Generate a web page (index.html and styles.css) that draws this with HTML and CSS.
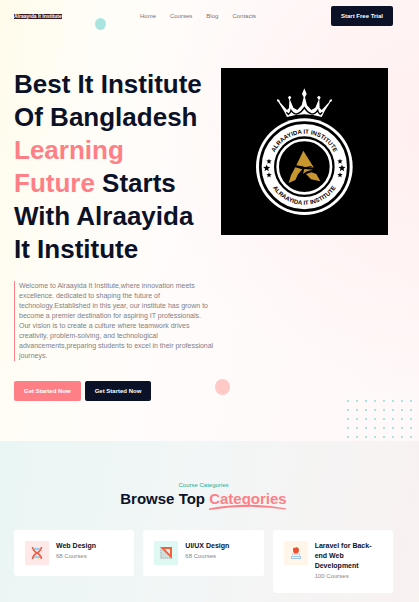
FILE: index.html
```html
<!DOCTYPE html>
<html lang="en">
<head>
<meta charset="utf-8">
<meta name="viewport" content="width=device-width, initial-scale=1">
<title>Alraayida It Institute</title>
<link rel="stylesheet" href="styles.css">
</head>
<body>
<div class="top">
  <header class="header">
    <a class="brand" href="#">Alraayida It Institute</a>
    <nav class="nav">
      <a href="#">Home</a>
      <a href="#">Courses</a>
      <a href="#">Blog</a>
      <a href="#">Contacts</a>
    </nav>
    <button class="btn btn-dark" type="button">Start Free Trial</button>
  </header>
  <main class="hero">
    <div class="intro">
      <h1>Best It Institute<br>Of Bangladesh<br><span class="accent">Learning<br>Future</span> Starts<br>With Alraayida<br>It Institute</h1>
      <p class="lead">Welcome to Alraayida It Institute,where innovation meets<br>excellence. dedicated to shaping the future of<br>technology.Established in this year, our institute has grown to<br>become a premier destination for aspiring IT professionals.<br>Our vision is to create a culture where teamwork drives<br>creativity, problem-solving, and technological<br>advancements,preparing students to excel in their professional<br>journeys.</p>
      <div class="actions">
        <button class="btn btn-pink" type="button">Get Started Now</button>
        <button class="btn btn-dark" type="button">Get Started Now</button>
      </div>
    </div>
    <svg class="emblem" viewBox="18 24 501 501" role="img" aria-label="Alraayida It Institute emblem">
      <defs>
        <path id="arc-top" d="M169 320A99 99 0 0 1 367 320"/>
        <path id="arc-bottom" d="M154 320A114 114 0 0 0 382 320"/>
        <path id="star" d="M0-8 2-3 8-2.500 3.500 1.500 5 7.500 0 4-5 7.500-3.500 1.500-8-2.500-2-3Z"/>
      </defs>
      <rect x="18" y="24" width="501" height="501" fill="#000"/>
      <path fill="#fff" d="M268 85 275 102 270 112 276 136 289 150 301 143 311 119 306 112 312 107 317 112 313 121 314 144 320 150 342 127 344 120 350 117 351 123 346 126 329 153 320 171 Q268 155 216 171L207 153 190 126 186 123 187 117 193 120 195 127 216 150 222 144 223 121 219 112 224 107 229 112 225 119 235 143 247 150 260 136 266 112 261 102Z"/>
      <path fill="none" stroke="#000" stroke-width="4" d="M214 157 220 163Q227 158 228 151 235 162 246 162 261 156 268 143 275 156 290 162 301 162 308 151 309 158 316 163L322 157"/>
      <circle cx="268" cy="320" r="145" fill="#fff"/>
      <circle cx="268" cy="320" r="132" fill="none" stroke="#000" stroke-width="8"/>
      <circle cx="268" cy="320" r="91" fill="#000"/>
      <circle cx="268" cy="320" r="80" fill="none" stroke="#fff" stroke-width="8"/>
      <g class="emblem-text">
        <text><textPath href="#arc-top" startOffset="50%">ALRAAYIDA IT INSTITUTE</textPath></text>
        <text><textPath href="#arc-bottom" startOffset="50%">ALRAAYIDA IT INSTITUTE</textPath></text>
      </g>
      <use href="#star" x="162" y="304"/><use href="#star" transform="translate(155 324) scale(1.300)"/><use href="#star" x="162" y="345"/>
      <use href="#star" x="375" y="304"/><use href="#star" transform="translate(381 324) scale(1.300)"/><use href="#star" x="375" y="345"/>
      <g fill="#c8962e">
        <path d="M265 272 296 322 280 324 262 319 244 316Z"/>
        <path d="M241 322 262 328 249 343 241 360 221 369 228 346Z"/>
        <path d="M273 342 289 337 304 342 316 364 288 358Z"/>
        <path d="M268 327 294 329 276 334 264 341Z"/>
      </g>
      <path d="M240 318Q262 328 290 320" fill="none" stroke="#000" stroke-width="4"/>
    </svg>
  </main>
  <span class="bubble bubble-teal"></span>
  <span class="bubble bubble-pink"></span>
  <span class="dots"></span>
</div>
<section class="categories">
  <p class="eyebrow">Course Categories</p>
  <h2>Browse Top <span class="accent marked">Categories<svg class="swoosh" viewBox="0 0 75 6" preserveAspectRatio="none" aria-hidden="true"><path d="M0 4.500Q36-3 75 4.500L74 5.500Q38 0 0 6Z"/></svg></span></h2>
  <div class="grid">
    <article class="card">
      <span class="icon icon-pink">
        <svg viewBox="0 0 12 12" aria-hidden="true"><path d="M2 .5h8L6 5ZM2 11.500h8L6 7Z" fill="#d5edf5"/><path d="M3 2h6M3 10h6" stroke="#62b5dc"/><path d="M1.500 0Q2 4 6 6T10.500 12M10.500 0Q10 4 6 6T1.500 12" fill="none" stroke="#ef5a40" stroke-width="1.600"/><path d="M4 1h1M7 11h1" stroke="#f9bc45"/></svg>
      </span>
      <div><h3>Web Design</h3><p>68 Courses</p></div>
    </article>
    <article class="card">
      <span class="icon icon-teal">
        <svg viewBox="0 0 12 12" aria-hidden="true"><path d="M0 1h3l8 9v2H0Z" fill="#cfdedd"/><path d="M1 3v8h9" fill="none" stroke="#a9babb" stroke-dasharray="1 1"/><path d="M0 0H12V12ZM5 2 10 7V2Z" fill="#f4603c" fill-rule="evenodd"/><path d="M5 2 10 7V2Z" fill="#fbeae5"/></svg>
      </span>
      <div><h3>UI/UX Design</h3><p>68 Courses</p></div>
    </article>
    <article class="card">
      <span class="icon icon-sand">
        <svg viewBox="0 0 12 12" aria-hidden="true"><path d="M2 6h8v3H2Z" fill="#cfdbe8"/><path d="M1 9h10v3H1Z" fill="#a5c5e6"/><path d="M2 8.500h7M2 10.500h8" stroke="#f5f7fa"/><path d="M6 1Q9 0 9 3T6 6.500Q3 6.500 3 3T6 1Z" fill="#ef4d30"/><path d="M6 1.500Q6 0 7.500 0" fill="none" stroke="#698c42"/></svg>
      </span>
      <div><h3>Laravel for Back-end Web Development</h3><p>100 Courses</p></div>
    </article>
  </div>
</section>
</body>
</html>
```
FILE: styles.css
```css
* {
  box-sizing: border-box;
}

body {
  margin: 0;
  min-height: 100vh;
  display: flex;
  flex-direction: column;
  font-family: "Liberation Sans", Arial, sans-serif;
  font-size: 6px;
  color: #0b1227;
}

h1, h2, h3, p {
  margin: 0;
}

a {
  color: inherit;
  text-decoration: none;
}

.top {
  position: relative;
  padding: 6px 26px 40px 14px;
  background:
    radial-gradient(circle at 100% 30%, #ffeff0 0, rgba(255, 242, 243, 0) 50%),
    linear-gradient(100deg, #fffcec 0%, #fffdf8 22%, #fffbfb 50%, #fff8f8 100%);
}

.header {
  display: grid;
  grid-template-columns: 126px 1fr auto;
  align-items: center;
}

.brand {
  justify-self: start;
  background: #3a191f;
  color: #fff;
  font-size: 5px;
  font-weight: bold;
  line-height: 5px;
}

.nav {
  display: flex;
  gap: 14px;
  color: #747579;
}

.btn {
  height: 20px;
  padding: 0 10px;
  border: 0;
  border-radius: 2px;
  color: #fff;
  font-family: inherit;
  font-size: 6px;
  font-weight: bold;
  white-space: nowrap;
}

.btn-dark {
  background: #0b1227;
}

.btn-pink {
  background: #ff7f87;
}

.hero {
  display: grid;
  grid-template-columns: minmax(0, 193fr) minmax(0, 167fr);
  column-gap: 14px;
  align-items: start;
  padding: 42px 5px 0 0;
}

h1 {
  font-size: 26px;
  line-height: 33px;
  white-space: nowrap;
}

.accent {
  color: #ff7f87;
}

.lead {
  margin: 15px 0 20px;
  padding-left: 4px;
  border-left: 1px solid #ff7f87;
  color: #808084;
  font-size: 7px;
  line-height: 10px;
  white-space: nowrap;
}

.actions {
  display: flex;
  gap: 4px;
}

.emblem {
  display: block;
  width: 100%;
}

.emblem-text {
  font-size: 18px;
  font-weight: bold;
  text-anchor: middle;
}

.bubble {
  position: absolute;
  border-radius: 50%;
}

.bubble-teal {
  top: 18px;
  left: 95px;
  width: 11px;
  height: 12px;
  background: #aae4df;
}

.bubble-pink {
  top: 379px;
  left: 215px;
  width: 15px;
  height: 16px;
  background: #ffcac5;
}

.dots {
  position: absolute;
  right: 0;
  bottom: 0;
  width: 76px;
  height: 45px;
  background: radial-gradient(circle at 5px 5px, #8edcd4 0, #b4e8e2 1px, transparent 1px) 0 0 / 9px 9px;
}

.categories {
  flex: 1;
  padding: 40px 26px 9px 14px;
  background: linear-gradient(100deg, #eaf6f4 0%, #f2f6f6 45%, #f8f2f1 100%);
  text-align: center;
}

.eyebrow {
  color: #20ad96;
  line-height: 8px;
}

h2 {
  font-size: 15px;
  line-height: 20px;
}

.marked {
  position: relative;
}

.swoosh {
  position: absolute;
  left: 0;
  bottom: -3px;
  width: 100%;
  height: 6px;
  fill: #ff7f87;
}

.grid {
  display: grid;
  grid-template-columns: repeat(3, 1fr);
  gap: 9px;
  align-items: start;
  margin-top: 21px;
  text-align: left;
}

.card {
  display: flex;
  gap: 7px;
  padding: 11px;
  border-radius: 3px;
  background: #fff;
}

.card p {
  color: #85868a;
  line-height: 11px;
}

h3 {
  font-size: 7px;
  line-height: 10px;
}

.icon {
  display: grid;
  flex: none;
  place-items: center;
  width: 24px;
  height: 24px;
  border-radius: 1px;
}

.icon svg {
  width: 12px;
  height: 12px;
}

.icon-pink {
  background: #ffe8e8;
}

.icon-teal {
  background: #e0f8f4;
}

.icon-sand {
  background: #fff5e8;
}
```
